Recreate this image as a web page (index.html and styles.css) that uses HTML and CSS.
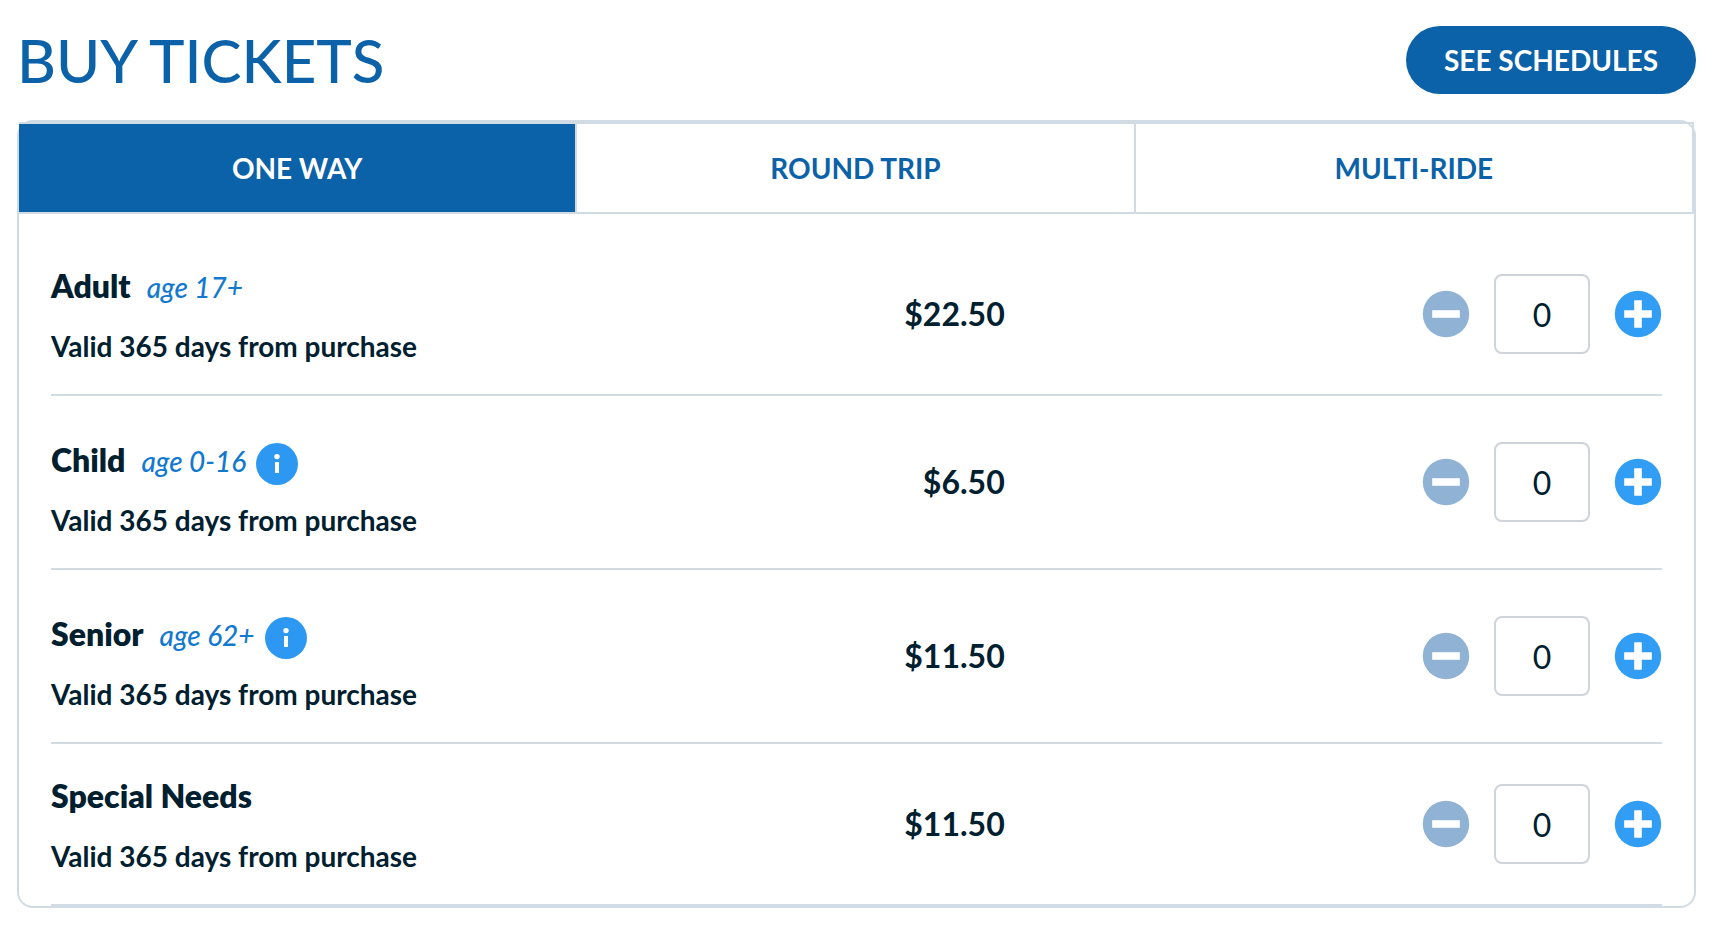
FILE: index.html
```html
<!DOCTYPE html>
<html lang="en">
<head>
<meta charset="utf-8">
<meta name="viewport" content="width=device-width, initial-scale=1">
<title>Buy Tickets</title>
<link rel="stylesheet" href="styles.css">
</head>
<body>
<svg class="symbols" aria-hidden="true">
  <symbol id="minus" viewBox="0 0 48 48"><circle cx="24" cy="24" r="23.2" fill="#8fb2d5"/><path fill="#fff" d="M10.2 20.2h27.6v7.6H10.2z"/></symbol>
  <symbol id="plus" viewBox="0 0 48 48"><circle cx="24" cy="24" r="23.2" fill="#329df4"/><path fill="#fff" d="M20.2 10.2h7.6v10h10v7.6h-10v10h-7.6v-10h-10v-7.6h10z"/></symbol>
  <symbol id="info" viewBox="0 0 42 42"><circle cx="21" cy="21" r="21" fill="#2d98f2"/><circle cx="21" cy="13.6" r="2.7" fill="#fff"/><path fill="#fff" d="M19 19h4v11h-4z"/></symbol>
</svg>
<header class="header">
  <h1 class="title">BUY TICKETS</h1>
  <a class="schedules" href="#schedules">SEE SCHEDULES</a>
</header>
<main class="card">
  <div class="tabs" role="tablist">
    <button class="tab tab-active" type="button" role="tab" aria-selected="true">ONE WAY</button>
    <button class="tab" type="button" role="tab" aria-selected="false">ROUND TRIP</button>
    <button class="tab" type="button" role="tab" aria-selected="false">MULTI-RIDE</button>
  </div>
  <ul class="fares">
    <li class="fare">
      <div class="info">
        <div class="heading"><div class="names"><label class="name" for="adult">Adult</label><em class="age">age 17+</em></div></div>
        <p class="valid">Valid 365 days from purchase</p>
      </div>
      <span class="price">$22.50</span>
      <div class="stepper">
        <button class="step" type="button" aria-label="Remove adult ticket" disabled><svg class="step-icon"><use href="#minus"/></svg></button>
        <input class="count" id="adult" type="text" inputmode="numeric" value="0">
        <button class="step" type="button" aria-label="Add adult ticket"><svg class="step-icon"><use href="#plus"/></svg></button>
      </div>
    </li>
    <li class="fare">
      <div class="info">
        <div class="heading"><div class="names"><label class="name" for="child">Child</label><em class="age">age 0-16</em></div><button class="hint" type="button" aria-label="About child tickets"><svg class="hint-icon"><use href="#info"/></svg></button></div>
        <p class="valid">Valid 365 days from purchase</p>
      </div>
      <span class="price">$6.50</span>
      <div class="stepper">
        <button class="step" type="button" aria-label="Remove child ticket" disabled><svg class="step-icon"><use href="#minus"/></svg></button>
        <input class="count" id="child" type="text" inputmode="numeric" value="0">
        <button class="step" type="button" aria-label="Add child ticket"><svg class="step-icon"><use href="#plus"/></svg></button>
      </div>
    </li>
    <li class="fare">
      <div class="info">
        <div class="heading"><div class="names"><label class="name" for="senior">Senior</label><em class="age">age 62+</em></div><button class="hint" type="button" aria-label="About senior tickets"><svg class="hint-icon"><use href="#info"/></svg></button></div>
        <p class="valid">Valid 365 days from purchase</p>
      </div>
      <span class="price">$11.50</span>
      <div class="stepper">
        <button class="step" type="button" aria-label="Remove senior ticket" disabled><svg class="step-icon"><use href="#minus"/></svg></button>
        <input class="count" id="senior" type="text" inputmode="numeric" value="0">
        <button class="step" type="button" aria-label="Add senior ticket"><svg class="step-icon"><use href="#plus"/></svg></button>
      </div>
    </li>
    <li class="fare">
      <div class="info">
        <div class="heading"><div class="names"><label class="name" for="special">Special Needs</label></div></div>
        <p class="valid">Valid 365 days from purchase</p>
      </div>
      <span class="price">$11.50</span>
      <div class="stepper">
        <button class="step" type="button" aria-label="Remove special needs ticket" disabled><svg class="step-icon"><use href="#minus"/></svg></button>
        <input class="count" id="special" type="text" inputmode="numeric" value="0">
        <button class="step" type="button" aria-label="Add special needs ticket"><svg class="step-icon"><use href="#plus"/></svg></button>
      </div>
    </li>
  </ul>
</main>
</body>
</html>
```
FILE: styles.css
```css
:root {
  --blue: #0b62a8;
  --line: #d0dbe4;
  --ink: #00202f;
}

*, *::before, *::after { box-sizing: border-box; }

body {
  margin: 0;
  padding: 26px 18px 18px 17px;
  background: #fff;
  color: var(--ink);
  font-family: Lato, "Open Sans", sans-serif;
}

button, input { font: inherit; color: inherit; }

.symbols { display: none; }

.header {
  display: flex;
  justify-content: space-between;
  align-items: center;
  margin-bottom: 26px;
}

.title {
  margin: 0;
  font-size: 60px;
  line-height: 68px;
  font-weight: 500;
  color: var(--blue);
}

.schedules {
  padding: 0 38px;
  border-radius: 34px;
  background: var(--blue);
  color: #fff;
  font-size: 28px;
  line-height: 68px;
  font-weight: 700;
  text-decoration: none;
}

.card {
  border: 2px solid var(--line);
  border-radius: 16px;
}

.tabs {
  display: grid;
  grid-template-columns: repeat(3, 1fr);
}

.tab {
  padding: 0;
  border: solid var(--line);
  border-width: 2px 2px 2px 0;
  background: none;
  color: var(--blue);
  font-size: 28px;
  line-height: 88px;
  font-weight: 700;
}

.tab-active {
  background: var(--blue);
  background-clip: padding-box;
  color: #fff;
}

.fares {
  list-style: none;
  margin: 0;
  padding: 20px 32px 0;
}

.fare {
  display: grid;
  grid-template-columns: 400fr 192fr 408fr;
  align-items: center;
  padding: 32px 0;
  border-bottom: 2px solid var(--line);
}

.info {
  display: flex;
  flex-direction: column;
  gap: 24px;
}

.heading {
  display: flex;
  align-items: flex-end;
  gap: 10px;
}

.names {
  display: flex;
  align-items: baseline;
  gap: 16px;
  height: 40px;
}

.name {
  font-size: 32px;
  line-height: 40px;
  font-weight: 800;
}

.age {
  color: #1379ce;
  font-size: 28px;
  line-height: 32px;
  font-weight: 500;
}

.hint {
  margin: 15px 0 -5px;
  padding: 0;
  border: 0;
  background: none;
}

.hint-icon { display: block; width: 42px; height: 42px; }

.valid {
  margin: 0;
  font-size: 28px;
  line-height: 32px;
  font-weight: 700;
}

.price {
  text-align: right;
  font-size: 32px;
  line-height: 40px;
  font-weight: 700;
}

.stepper {
  display: flex;
  justify-content: flex-end;
  align-items: center;
  gap: 24px;
}

.step {
  padding: 0;
  border: 0;
  background: none;
}

.step-icon { display: block; width: 48px; height: 48px; }

.count {
  width: 96px;
  height: 80px;
  padding: 0;
  border: 2px solid #ced4da;
  border-radius: 8px;
  background: #fff;
  font-size: 32px;
  text-align: center;
}
```
